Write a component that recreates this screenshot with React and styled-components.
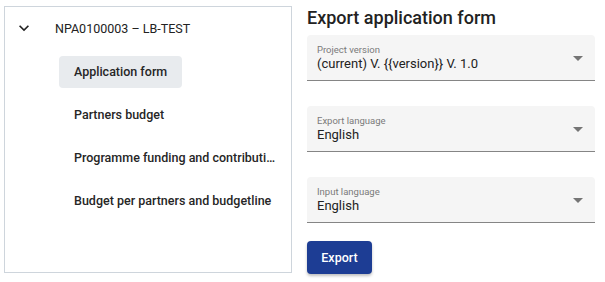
import styled, { createGlobalStyle } from "styled-components";

const GlobalStyle = createGlobalStyle`
  body {
    margin: 0;
    font-family: Roboto, "Liberation Sans", sans-serif;
    color: #222;
    background: #fff;
  }
`;

const Page = styled.div`
  display: flex;
  gap: 15px;
  padding: 6px 10px 0 4px;
  width: 605px;
  height: 282px;
  box-sizing: border-box;
`;

const TreePanel = styled.nav`
  width: 288px;
  height: 267px;
  box-sizing: border-box;
  border: 1px solid #ced5dc;
  padding: 5px 0 0 9px;
`;

const ProjectRow = styled.div`
  display: flex;
  align-items: center;
  gap: 21px;
  height: 32px;
  font-size: 12.5px;
  color: #222;
`;

const Chevron = styled.svg`
  width: 20px;
  height: 20px;
  fill: #222;
`;

const Items = styled.ul`
  list-style: none;
  margin: 12px 0 0 45px;
  padding: 0;
  display: flex;
  flex-direction: column;
  gap: 11px;
`;

const Item = styled.li`
  width: fit-content;
  max-width: 202px;
  height: 32px;
  line-height: 32px;
  padding: 0 15px;
  border-radius: 4px;
  font-size: 12.5px;
  font-weight: 500;
  color: #262626;
  background: ${(p) => (p.$active ? "#e8ebee" : "transparent")};
  white-space: nowrap;
  overflow: hidden;
  text-overflow: ellipsis;
`;

const FormColumn = styled.section`
  flex: 1;
  display: flex;
  flex-direction: column;
`;

const Title = styled.h2`
  margin: 0 0 5px;
  font-size: 18px;
  line-height: 24px;
  font-weight: 500;
  color: #222;
`;

const Fields = styled.div`
  display: flex;
  flex-direction: column;
  gap: 25px;
`;

const Field = styled.div`
  position: relative;
  height: 46px;
  box-sizing: border-box;
  padding: 9px 10px 0;
  background: #f5f5f5;
  border-radius: 4px 4px 0 0;
  border-bottom: 1px solid #858585;
`;

const Label = styled.div`
  font-size: 9.5px;
  line-height: 11px;
  color: #7a7a7a;
`;

const Value = styled.div`
  font-size: 13px;
  line-height: 17px;
  color: #222;
`;

const Arrow = styled.svg`
  position: absolute;
  right: 5px;
  top: 11px;
  width: 24px;
  height: 24px;
  fill: #757575;
`;

const ExportButton = styled.button`
  margin-top: 18px;
  width: 65px;
  height: 33px;
  border: none;
  border-radius: 4px;
  background: #1d3d94;
  color: #fff;
  font-family: inherit;
  font-size: 12.5px;
  font-weight: 500;
  box-shadow: 0 2px 3px rgba(0, 0, 0, 0.25);
  cursor: pointer;
`;

const items = [
  "Application form",
  "Partners budget",
  "Programme funding and contribution sources",
  "Budget per partners and budgetline",
];

const fields = [
  { label: "Project version", value: "(current) V. {{version}} V. 1.0" },
  { label: "Export language", value: "English" },
  { label: "Input language", value: "English" },
];

export default function App() {
  return (
    <>
      <GlobalStyle />
      <Page>
        <TreePanel>
          <ProjectRow>
            <Chevron viewBox="0 0 24 24">
              <path d="M16.59 8.59 12 13.17 7.41 8.59 6 10l6 6 6-6z" />
            </Chevron>
            NPA0100003 – LB-TEST
          </ProjectRow>
          <Items>
            {items.map((name, i) => (
              <Item key={name} $active={i === 0}>
                {name}
              </Item>
            ))}
          </Items>
        </TreePanel>
        <FormColumn>
          <Title>Export application form</Title>
          <Fields>
            {fields.map((f) => (
              <Field key={f.label}>
                <Label>{f.label}</Label>
                <Value>{f.value}</Value>
                <Arrow viewBox="0 0 24 24">
                  <path d="M7 10l5 5 5-5z" />
                </Arrow>
              </Field>
            ))}
          </Fields>
          <div>
            <ExportButton>Export</ExportButton>
          </div>
        </FormColumn>
      </Page>
    </>
  );
}
